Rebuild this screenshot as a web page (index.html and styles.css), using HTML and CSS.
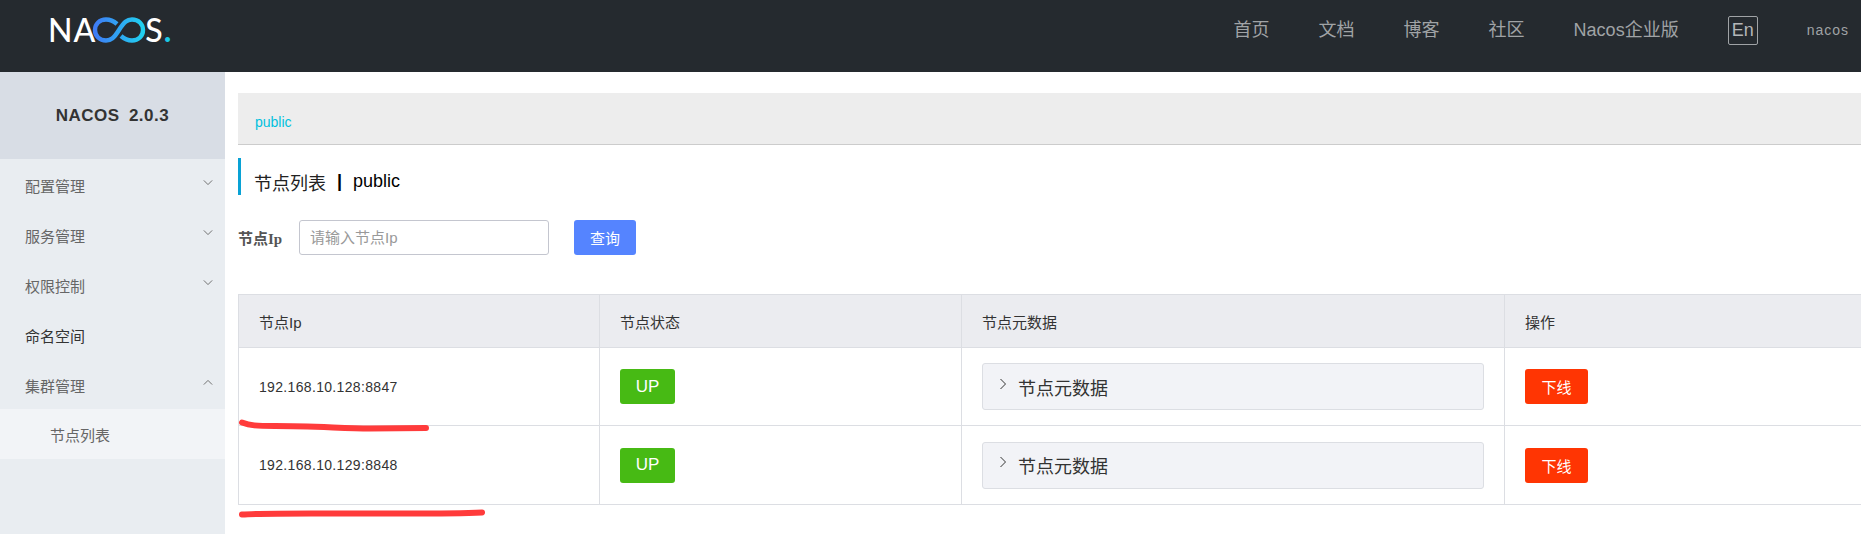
FILE: index.html
```html
<!DOCTYPE html>
<html lang="zh">
<head>
<meta charset="utf-8">
<title>Nacos</title>
<link rel="stylesheet" href="styles.css">
</head>
<body>
<div class="app">
  <header class="topbar">
    <div class="logo">
      <span class="logo-word">NA</span>
      <svg class="logo-mark" width="54" height="26" viewBox="0 0 54 26" aria-hidden="true">
        <defs>
          <linearGradient id="inf" x1="0" x2="1" y1="0" y2="0">
            <stop offset="0" stop-color="#3f7cf5"/>
            <stop offset="1" stop-color="#20d0f0"/>
          </linearGradient>
        </defs>
        <path d="M25 7C21 3.500 18 2.500 14 2.500C7.500 2.500 3 7 3 13C3 19 7.500 23.500 14 23.500C19 23.500 22 21 27 13C32 5 35 2.500 40 2.500C46.500 2.500 51 7 51 13C51 19 46.500 23.500 40 23.500C36 23.500 33 22.500 29 19" fill="none" stroke="url(#inf)" stroke-width="4.400"/>
      </svg>
      <span class="logo-word">S</span><span class="logo-dot">.</span>
    </div>
    <nav class="topnav">
      <a class="nav-link">首页</a>
      <a class="nav-link">文档</a>
      <a class="nav-link">博客</a>
      <a class="nav-link">社区</a>
      <a class="nav-link">Nacos企业版</a>
      <a class="nav-lang">En</a>
      <a class="nav-user">nacos</a>
    </nav>
  </header>
  <aside class="sidebar">
    <div class="side-title">NACOS 2.0.3</div>
    <ul class="menu">
      <li class="menu-item">配置管理<svg class="chev" viewBox="0 0 12 8"><path d="M1 1.500L6 6.500L11 1.500"/></svg></li>
      <li class="menu-item">服务管理<svg class="chev" viewBox="0 0 12 8"><path d="M1 1.500L6 6.500L11 1.500"/></svg></li>
      <li class="menu-item">权限控制<svg class="chev" viewBox="0 0 12 8"><path d="M1 1.500L6 6.500L11 1.500"/></svg></li>
      <li class="menu-item menu-strong">命名空间</li>
      <li class="menu-item">集群管理<svg class="chev" viewBox="0 0 12 8"><path d="M1 6.500L6 1.500L11 6.500"/></svg></li>
      <li class="menu-sub">节点列表</li>
    </ul>
  </aside>
  <main class="content">
    <div class="crumb"><span class="crumb-link">public</span></div>
    <h1 class="page-title"><span class="title-zh">节点列表</span><span class="title-sep">|</span><span>public</span></h1>
    <form class="search">
      <label class="search-label">节点Ip</label>
      <input class="search-input" type="text" placeholder="请输入节点Ip">
      <button class="btn btn-query" type="button">查询</button>
    </form>
    <table class="nodes">
      <colgroup>
        <col class="col-ip"><col class="col-state"><col class="col-meta"><col class="col-op">
      </colgroup>
      <thead>
        <tr><th>节点Ip</th><th>节点状态</th><th>节点元数据</th><th>操作</th></tr>
      </thead>
      <tbody>
        <tr class="row-a">
          <td class="cell-ip">192.168.10.128:8847</td>
          <td><span class="btn btn-up">UP</span></td>
          <td><div class="collapse"><svg class="collapse-arrow" viewBox="0 0 8 12"><path d="M1.500 1L6.500 6L1.500 11"/></svg>节点元数据</div></td>
          <td><span class="btn btn-off">下线</span></td>
        </tr>
        <tr class="row-b">
          <td class="cell-ip">192.168.10.129:8848</td>
          <td><span class="btn btn-up">UP</span></td>
          <td><div class="collapse"><svg class="collapse-arrow" viewBox="0 0 8 12"><path d="M1.500 1L6.500 6L1.500 11"/></svg>节点元数据</div></td>
          <td><span class="btn btn-off">下线</span></td>
        </tr>
      </tbody>
    </table>
  </main>
  <svg class="marks" width="1861" height="534" viewBox="0 0 1861 534" aria-hidden="true">
    <path d="M242 422.500C250 425.500 256 426 275 426C310 426 340 428 370 428.500L426 428"/>
    <path d="M242 514.500C262 513 300 513.500 360 513.500C410 513.500 450 514 482 512.500"/>
  </svg>
</div>
</body>
</html>
```

FILE: styles.css
```css
* { box-sizing: border-box; }
html, body { margin: 0; padding: 0; height: 100%; overflow: hidden; background: #fff; }
body { font-family: "Liberation Sans", "Noto Sans CJK SC", sans-serif; color: #333; font-size: 15px; }

.app { position: relative; display: grid; grid-template-columns: 225px 1fr; grid-template-rows: 72px 1fr; width: 1861px; height: 534px; overflow: hidden; }

.topbar { grid-column: 1 / 3; display: flex; align-items: center; background: #252a2f; padding: 0 12px 12px 48px; }
.logo { display: flex; align-items: center; height: 30px; color: #fff; }
.logo-word { font-family: Lato, sans-serif; font-size: 32px; font-weight: 500; line-height: 30px; letter-spacing: 1px; }
.logo-mark { margin: 0 -1px 0 -4px; }
.logo-dot { font-family: Lato, sans-serif; font-size: 32px; line-height: 30px; font-weight: 700; color: #1bc8e6; }

.topnav { margin-left: auto; display: flex; align-items: center; gap: 49px; color: #a0a3a6; }
.nav-link, .nav-lang { display: block; font-size: 18px; line-height: 24px; white-space: nowrap; }
.nav-lang { width: 30px; height: 29px; line-height: 27px; text-align: center; border: 1px solid #a0a3a6; border-radius: 2px; color: #b4b6b8; }
.nav-user { display: block; font-size: 14px; line-height: 20px; letter-spacing: 1px; }

.sidebar { background: #e9edf1; }
.side-title { height: 87px; display: flex; align-items: center; justify-content: center; background: #d8dde5; font-size: 17px; font-weight: 700; word-spacing: 4px; letter-spacing: .5px; color: #333; }
.menu { list-style: none; margin: 0; padding: 0; }
.menu-item { height: 50px; display: flex; align-items: center; justify-content: space-between; padding: 3px 12px 0 25px; font-size: 15px; color: #666; }
.menu-strong { color: #333; }
.chev { width: 10px; height: 7px; margin-top: -6px; fill: none; stroke: #666; stroke-width: 1.100; }
.menu-sub { height: 50px; display: flex; align-items: center; padding: 0 0 0 50px; font-size: 15px; color: #666; background: #f2f4f7; }

.content { padding: 21px 0 0 13px; min-width: 0; }
.crumb { height: 52px; background: #ededed; border-bottom: 1px solid #ccc; padding: 19px 0 0 17px; line-height: 20px; }
.crumb-link { color: #00c1de; font-size: 14px; font-weight: 300; }
.page-title { height: 37px; margin: 13px 0 0; padding: 10px 0 0 13px; border-left: 3px solid #09a2d5; display: flex; align-items: center; font-size: 18px; font-weight: 400; color: #000; }
.title-zh { color: #222; }
.title-sep { margin: 0 11px 0 11px; font-weight: 700; }

.search { display: flex; align-items: center; height: 35px; margin-top: 25px; }
.search-label { width: 61px; font-family: "Liberation Serif", "Noto Sans CJK SC", serif; font-size: 15px; font-weight: 700; color: #555; }
.search-input { width: 250px; height: 35px; padding: 0 10px; border: 1px solid #c4c6cf; border-radius: 3px; font: 15px "Liberation Sans", "Noto Sans CJK SC", sans-serif; outline: none; }
.search-input::placeholder { color: #999; opacity: 1; }
.btn { display: inline-flex; align-items: center; justify-content: center; height: 35px; border-radius: 3px; color: #fff; font-family: inherit; }
.btn-query { width: 62px; margin-left: 25px; border: 0; background: #5584ff; font-size: 15px; }
.btn-up { width: 55px; background: #47ba14; font-size: 17px; }
.btn-off { width: 63px; background: #ff3503; font-size: 15px; }

.nodes { width: 1666px; margin-top: 39px; table-layout: fixed; border-collapse: collapse; font-size: 15px; color: #333; }
.col-ip { width: 361px; }
.col-state { width: 362px; }
.col-meta { width: 543px; }
.col-op { width: 400px; }
.nodes th, .nodes td { border: 1.500px solid #dcdee3; padding: 0 0 0 20px; text-align: left; font-weight: 400; }
.nodes th { height: 53px; background: #ebecf0; font-weight: 400; }
.nodes tbody tr.row-a td { height: 78px; }
.nodes tbody tr.row-b td { height: 79px; }
.nodes td:nth-child(3) { padding: 0 20px; }
.nodes td:nth-child(4) { padding-left: 20px; }
.cell-ip { font-size: 14px; letter-spacing: .33px; }
.collapse { display: flex; align-items: center; height: 47px; padding-left: 16px; background: #f2f3f7; border: 1px solid #dcdee3; border-radius: 3px; font-size: 18px; color: #333; }
.collapse-arrow { width: 8px; height: 12px; margin: -6px 11px 0 0; fill: none; stroke: #333; stroke-width: 1; }

.marks { position: absolute; left: 0; top: 0; pointer-events: none; }
.marks path { fill: none; stroke: #ff3b3b; stroke-width: 6; stroke-linecap: round; stroke-linejoin: round; }
```
